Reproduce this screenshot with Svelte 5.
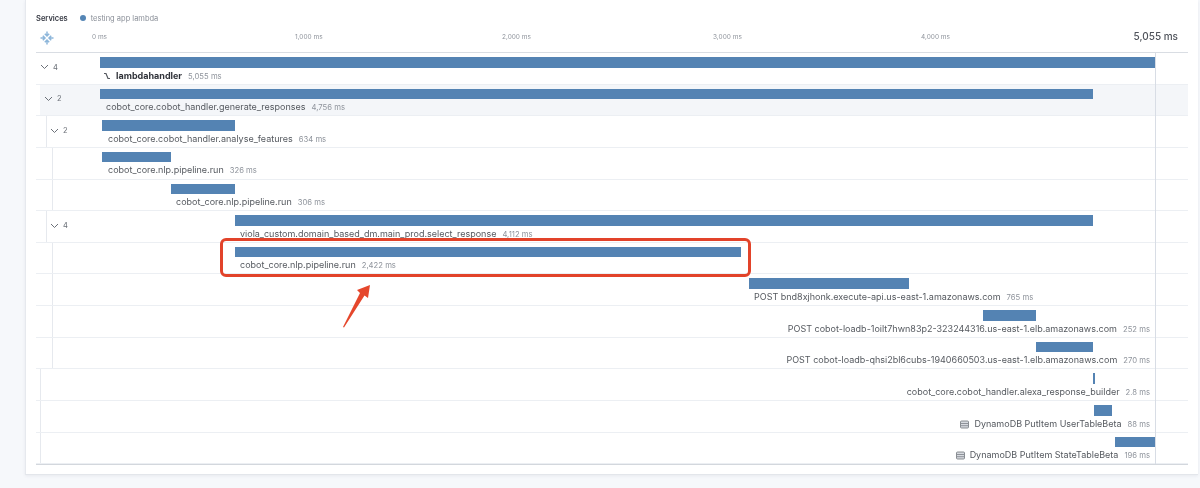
<script>
  // pixel positions on the timeline: 0 ms sits at x=100 of the page
  const origin = 100;
  const rows = [
    { indent: 0, count: 4, from: 100, to: 1156, at: 103, name: "lambdahandler", time: "5,055 ms", kind: "root" },
    { indent: 4, count: 2, from: 100, to: 1093, at: 106, name: "cobot_core.cobot_handler.generate_responses", time: "4,756 ms", active: true },
    { indent: 10, count: 2, from: 102, to: 234.5, at: 108, name: "cobot_core.cobot_handler.analyse_features", time: "634 ms" },
    { indent: 16, from: 102, to: 170.5, at: 108, name: "cobot_core.nlp.pipeline.run", time: "326 ms" },
    { indent: 16, from: 170.5, to: 234.5, at: 176, name: "cobot_core.nlp.pipeline.run", time: "306 ms" },
    { indent: 10, count: 4, from: 234.5, to: 1093, at: 240, name: "viola_custom.domain_based_dm.main_prod.select_response", time: "4,112 ms" },
    { indent: 16, from: 235, to: 741, at: 240, name: "cobot_core.nlp.pipeline.run", time: "2,422 ms" },
    { indent: 16, from: 749, to: 908.5, at: 754, name: "POST bnd8xjhonk.execute-api.us-east-1.amazonaws.com", time: "765 ms" },
    { indent: 16, from: 983, to: 1036, name: "POST cobot-loadb-1oilt7hwn83p2-323244316.us-east-1.elb.amazonaws.com", time: "252 ms" },
    { indent: 16, from: 1036, to: 1093, name: "POST cobot-loadb-qhsi2bl6cubs-1940660503.us-east-1.elb.amazonaws.com", time: "270 ms" },
    { indent: 4, from: 1093, to: 1094.5, name: "cobot_core.cobot_handler.alexa_response_builder", time: "2.8 ms" },
    { indent: 4, from: 1094, to: 1112, name: "DynamoDB PutItem UserTableBeta", time: "88 ms", kind: "db" },
    { indent: 4, from: 1114.5, to: 1155.5, name: "DynamoDB PutItem StateTableBeta", time: "196 ms", kind: "db" },
  ];
  const ticks = [
    { label: "0 ms", width: 203 },
    { label: "1,000 ms", width: 207 },
    { label: "2,000 ms", width: 211 },
    { label: "3,000 ms", width: 208 },
    { label: "4,000 ms", width: 208 },
  ];
</script>

<div class="page">
  <div class="card">
    <div class="legend">
      <strong>Services</strong>
      <span class="dot"></span>
      <span>testing app lambda</span>
    </div>

    <div class="axis">
      <svg class="expand" width="14" height="14" viewBox="0 0 14 14" aria-hidden="true">
        <path d="M7 .5V5M4.8 2.8 7 5l2.2-2.2M7 13.5V9M4.8 11.2 7 9l2.2 2.2M.5 7H5M2.8 4.8 5 7 2.8 9.2M13.5 7H9M11.2 4.8 9 7l2.2 2.2" fill="none" stroke="currentColor" stroke-width="1.5" />
      </svg>
      <div class="ticks">
        {#each ticks as tick}
          <span class="tick" style="width: {tick.width}px">{tick.label}</span>
        {/each}
      </div>
      <span class="total">5,055 ms</span>
    </div>

    <div class="rows">
      {#each rows as row}
        <div class="row">
          <div class="inner" class:active={row.active} class:guide={row.indent > 4 || (row.indent === 4 && !row.count)} style="margin-left: {row.indent}px">
            <div class="toggle" style="width: {64 - row.indent}px">
              {#if row.count}
                <svg width="9" height="6" viewBox="0 0 9 6" aria-hidden="true">
                  <path d="M1 1l3.5 3.5L8 1" fill="none" stroke="currentColor" />
                </svg>
                <span>{row.count}</span>
              {/if}
            </div>
            <div class="track">
              <div class="bar" style="margin-left: {row.from - origin}px; width: {row.to - row.from}px"></div>
              <div class="label" class:end={!row.at} style={row.at ? `margin-left: ${row.at - origin}px` : ""}>
                {#if row.kind === "root"}
                  <svg class="root-icon" width="8" height="8" viewBox="0 0 8 8" aria-hidden="true">
                    <path d="M1 1.5h2l2 5h2" fill="none" stroke="currentColor" stroke-width="1.2" />
                  </svg>
                {:else if row.kind === "db"}
                  <svg class="db-icon" width="9" height="9" viewBox="0 0 9 9" aria-hidden="true">
                    <rect x="0.5" y="1" width="8" height="7" rx="1" fill="#d8dbe0" stroke="currentColor" stroke-width="0.8" />
                    <path d="M1 3.5h7M1 5.7h7" stroke="currentColor" stroke-width="0.7" />
                  </svg>
                {/if}
                <span class="name" class:root={row.kind === "root"}>{row.name}</span>
                <span class="time">{row.time}</span>
              </div>
            </div>
          </div>
        </div>
      {/each}
      <div class="end-line"></div>
    </div>

    <div class="highlight"></div>
    <svg class="arrow" width="36" height="50" viewBox="0 0 36 50" aria-hidden="true">
      <path d="M1 43 18 9l-3-3L28 1l-2 13-3.5-2.5L2 43.5z" fill="#e5472c" />
    </svg>
  </div>
</div>

<style>
  :global(body) {
    background: #f6f8fb;
    overflow: hidden;
  }

  .page {
    height: 488px;
    padding: 0 2px 0 25px;
    box-sizing: border-box;
    font-family: Inter, "Liberation Sans", sans-serif;
    color: #4a4f57;
    filter: blur(0.7px);
  }

  .card {
    position: relative;
    height: 475px;
    box-sizing: border-box;
    padding: 13px 10px 0 10px;
    background: #fff;
    border-left: 1px solid #e6e9ee;
    border-bottom: 1px solid #e3e6eb;
    box-shadow: 0 1px 3px rgba(60, 70, 90, 0.08);
  }

  .legend {
    display: flex;
    align-items: center;
    height: 10px;
    font-size: 7.5px;
    color: #8a8f98;
  }

  .legend strong {
    color: #343741;
    font-weight: 600;
    margin-right: 12px;
  }

  .dot {
    width: 6px;
    height: 6px;
    border-radius: 50%;
    background: #5485b5;
    margin-right: 5px;
  }

  .axis {
    display: flex;
    align-items: center;
    height: 29px;
    font-size: 6.5px;
    color: #8f949c;
  }

  .expand {
    flex: none;
    margin-left: 4px;
    margin-top: 1px;
    color: #8db6da;
  }

  .ticks {
    display: flex;
    margin-left: 38px;
    margin-bottom: 2px;
  }

  .tick {
    flex: none;
  }

  .total {
    margin-left: auto;
    margin-right: 10px;
    margin-bottom: 4px;
    font-size: 10px;
    color: #4f535b;
    font-weight: 500;
  }

  .rows {
    position: relative;
    border-top: 1px solid #d9dde3;
    border-bottom: 1px solid #d3d7dd;
  }

  .row {
    display: flex;
    height: 31.65px;
    box-sizing: border-box;
    border-bottom: 1px solid #eceff3;
  }

  .row:last-of-type {
    border-bottom: none;
  }

  .inner {
    flex: 1;
    min-width: 0;
    display: flex;
    box-sizing: border-box;
  }

  .inner.guide {
    box-shadow: inset 1px 0 0 #e6e9ee;
  }

  .inner.active {
    background: #f4f6f9;
  }

  .toggle {
    flex: none;
    box-sizing: border-box;
    display: flex;
    align-items: center;
    gap: 4px;
    padding-left: 4px;
    padding-bottom: 2px;
    font-size: 7.5px;
    color: #6b7078;
  }

  .track {
    width: 1056px;
    flex: none;
    padding-top: 4px;
  }

  .bar {
    height: 10.5px;
    background: #5483b3;
  }

  .label {
    display: flex;
    align-items: baseline;
    height: 12px;
    margin-top: 2px;
    font-size: 9px;
    line-height: 12px;
    white-space: nowrap;
    color: #55595f;
  }

  .label.end {
    justify-content: flex-end;
    padding-right: 6px;
  }

  .name.root {
    font-weight: 700;
    color: #30333a;
  }

  .time {
    margin-left: 6px;
    font-size: 7.7px;
    color: #8f949c;
  }

  .root-icon {
    margin-right: 5px;
    transform: translateY(1px);
  }

  .db-icon {
    margin-right: 5px;
    transform: translateY(2px);
    color: #6f737a;
  }

  .end-line {
    position: absolute;
    top: 0;
    bottom: 0;
    left: 1119px;
    width: 1px;
    background: #d8dde5;
  }

  .highlight {
    position: absolute;
    left: 194px;
    top: 238px;
    width: 531px;
    height: 39px;
    box-sizing: border-box;
    border: 3px solid #e2432a;
    border-radius: 6px;
  }

  .arrow {
    position: absolute;
    left: 316px;
    top: 284px;
  }
</style>
